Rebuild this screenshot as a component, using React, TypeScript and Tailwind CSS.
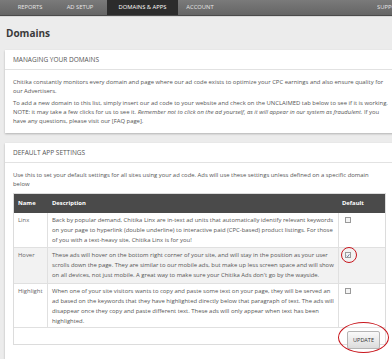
import React from "react";

const font = { fontFamily: '"Open Sans", "Liberation Sans", sans-serif' };

function Check({ checked }: { checked?: boolean }) {
  return (
    <div className="w-[6px] h-[6px] border border-[#9a9a9a] bg-[#f4f4f4] flex items-center justify-center">
      {checked && (
        <svg width="5" height="5" viewBox="0 0 10 10">
          <path d="M1.5 5.5 L4 8 L8.5 2" stroke="#3a5a8c" strokeWidth="1.8" fill="none" />
        </svg>
      )}
    </div>
  );
}

export default function App() {
  const rows = [
    {
      name: "Linx",
      bg: "bg-white",
      h: "h-[35px]",
      desc: "Back by popular demand, Chitika Linx are in-text ad units that automatically identify relevant keywords on your page to hyperlink (double underline) to interactive paid (CPC-based) product listings. For those of you with a text-heavy site, Chitika Linx is for you!",
      checked: false,
    },
    {
      name: "Hover",
      bg: "bg-[#f2f2f2]",
      h: "h-[36px]",
      desc: "These ads will hover on the bottom right corner of your site, and will stay in the position as your user scrolls down the page. They are similar to our mobile ads, but make up less screen space and will show on all devices, not just mobile. A great way to make sure your Chitika Ads don't go by the wayside.",
      checked: true,
    },
    {
      name: "Highlight",
      bg: "bg-white",
      h: "h-[44px]",
      desc: "When one of your site visitors wants to copy and paste some text on your page, they will be served an ad based on the keywords that they have highlighted directly below that paragraph of text. The ads will disappear once they copy and paste different text. These ads will only appear when text has been highlighted.",
      checked: false,
    },
  ];

  return (
    <div className="relative w-[392px] h-[359px] overflow-hidden bg-[#ececec]" style={font}>
      {/* Nav */}
      <div className="h-[16px] bg-gradient-to-b from-[#7a7a7a] to-[#656565] border-b border-[#4a4a4a] flex items-stretch text-[5.8px] text-[#e6e6e6] uppercase">
        <div className="w-[7px]" />
        <div className="w-[46px] flex items-center justify-center">Reports</div>
        <div className="w-[54px] flex items-center justify-center">Ad Setup</div>
        <div className="w-[71px] flex items-center justify-center bg-[#2c2c2c] text-white">Domains &amp; Apps</div>
        <div className="w-[44px] flex items-center justify-center">Account</div>
        <div className="flex-1" />
        <div className="w-[15px] overflow-hidden flex items-center whitespace-nowrap">Support</div>
      </div>
      <div className="h-[1px] bg-[#d8d8d8]" />

      {/* Title */}
      <div className="h-[33px] flex items-center pl-[6px] text-[10px] font-bold text-[#3a3a3a]">Domains</div>

      {/* Panel 1 */}
      <div className="ml-[5px] w-[389px] h-[83px] bg-white shadow-[0_1px_2px_rgba(0,0,0,0.25)]">
        <div className="h-[20px] flex items-center pl-[8px] text-[6.5px] text-[#555] uppercase border-b border-[#e2e2e2]">
          Managing your domains
        </div>
        <div className="pl-[8px] pr-[2px] pt-[8px] text-[5.9px] leading-[9px] text-[#555]">
          <p>
            Chitika constantly monitors every domain and page where our ad code exists to optimize your CPC earnings and also ensure quality for our Advertisers.
          </p>
          <p className="mt-[3px]">
            To add a new domain to this list, simply insert our ad code to your website and check on the UNCLAIMED tab below to see if it is working.{" "}
            NOTE: it may take a few clicks for us to see it.{" "}
            <i>Remember not to click on the ad yourself, as it will appear in our system as fraudulent.</i> If you have any questions, please visit our [FAQ page].
          </p>
        </div>
      </div>

      {/* Panel 2 */}
      <div className="ml-[5px] mt-[10px] w-[389px] bg-white shadow-[0_1px_2px_rgba(0,0,0,0.25)] pb-[14px]">
        <div className="h-[20px] flex items-center pl-[8px] text-[6.5px] text-[#555] uppercase border-b border-[#e2e2e2]">
          Default App Settings
        </div>
        <div className="px-[8px] pt-[8px] text-[5.9px] leading-[9px] text-[#555]">
          Use this to set your default settings for all sites using your ad code. Ads will use these settings unless defined on a specific domain below
        </div>
        <div className="mx-[8px] mt-[4px] w-[373px] border border-[#dcdcdc] text-[5.9px] text-[#555]">
          <div className="h-[19px] bg-[#4a4a4a] text-white font-bold flex items-center">
            <div className="w-[34px] pl-[4px]">Name</div>
            <div className="flex-1 pl-[4px]">Description</div>
            <div className="w-[46px] pl-[3px]">Default</div>
          </div>
          {rows.map((r) => (
            <div key={r.name} className={`flex border-b border-[#e0e0e0] ${r.bg} ${r.h}`}>
              <div className="w-[34px] pl-[4px] pt-[2px] leading-[10px] text-[#666] border-r border-[#e0e0e0]">{r.name}</div>
              <div className="flex-1 px-[4px] pt-[2px] leading-[10px] border-r border-[#e0e0e0]">{r.desc}</div>
              <div className="w-[46px] pl-[6px] pt-[4px]">
                <Check checked={r.checked} />
              </div>
            </div>
          ))}
          <div className="h-[16px] flex justify-end items-start pr-[5px]">
            <div className="mt-[3px] h-[18px] w-[33px] rounded-[2px] border border-[#b5b5b5] bg-gradient-to-b from-[#fafafa] to-[#dcdcdc] flex items-center justify-center text-[5.5px] text-[#333]">
              UPDATE
            </div>
          </div>
        </div>
      </div>

      {/* Annotations */}
      <div className="absolute left-[341px] top-[247px] w-[16px] h-[16px] rounded-full border-[1.5px] border-[#c8161d]" />
      <div className="absolute left-[338px] top-[322px] w-[51px] h-[31px] rounded-[50%] border-[1.5px] border-[#c8161d]" />
    </div>
  );
}
